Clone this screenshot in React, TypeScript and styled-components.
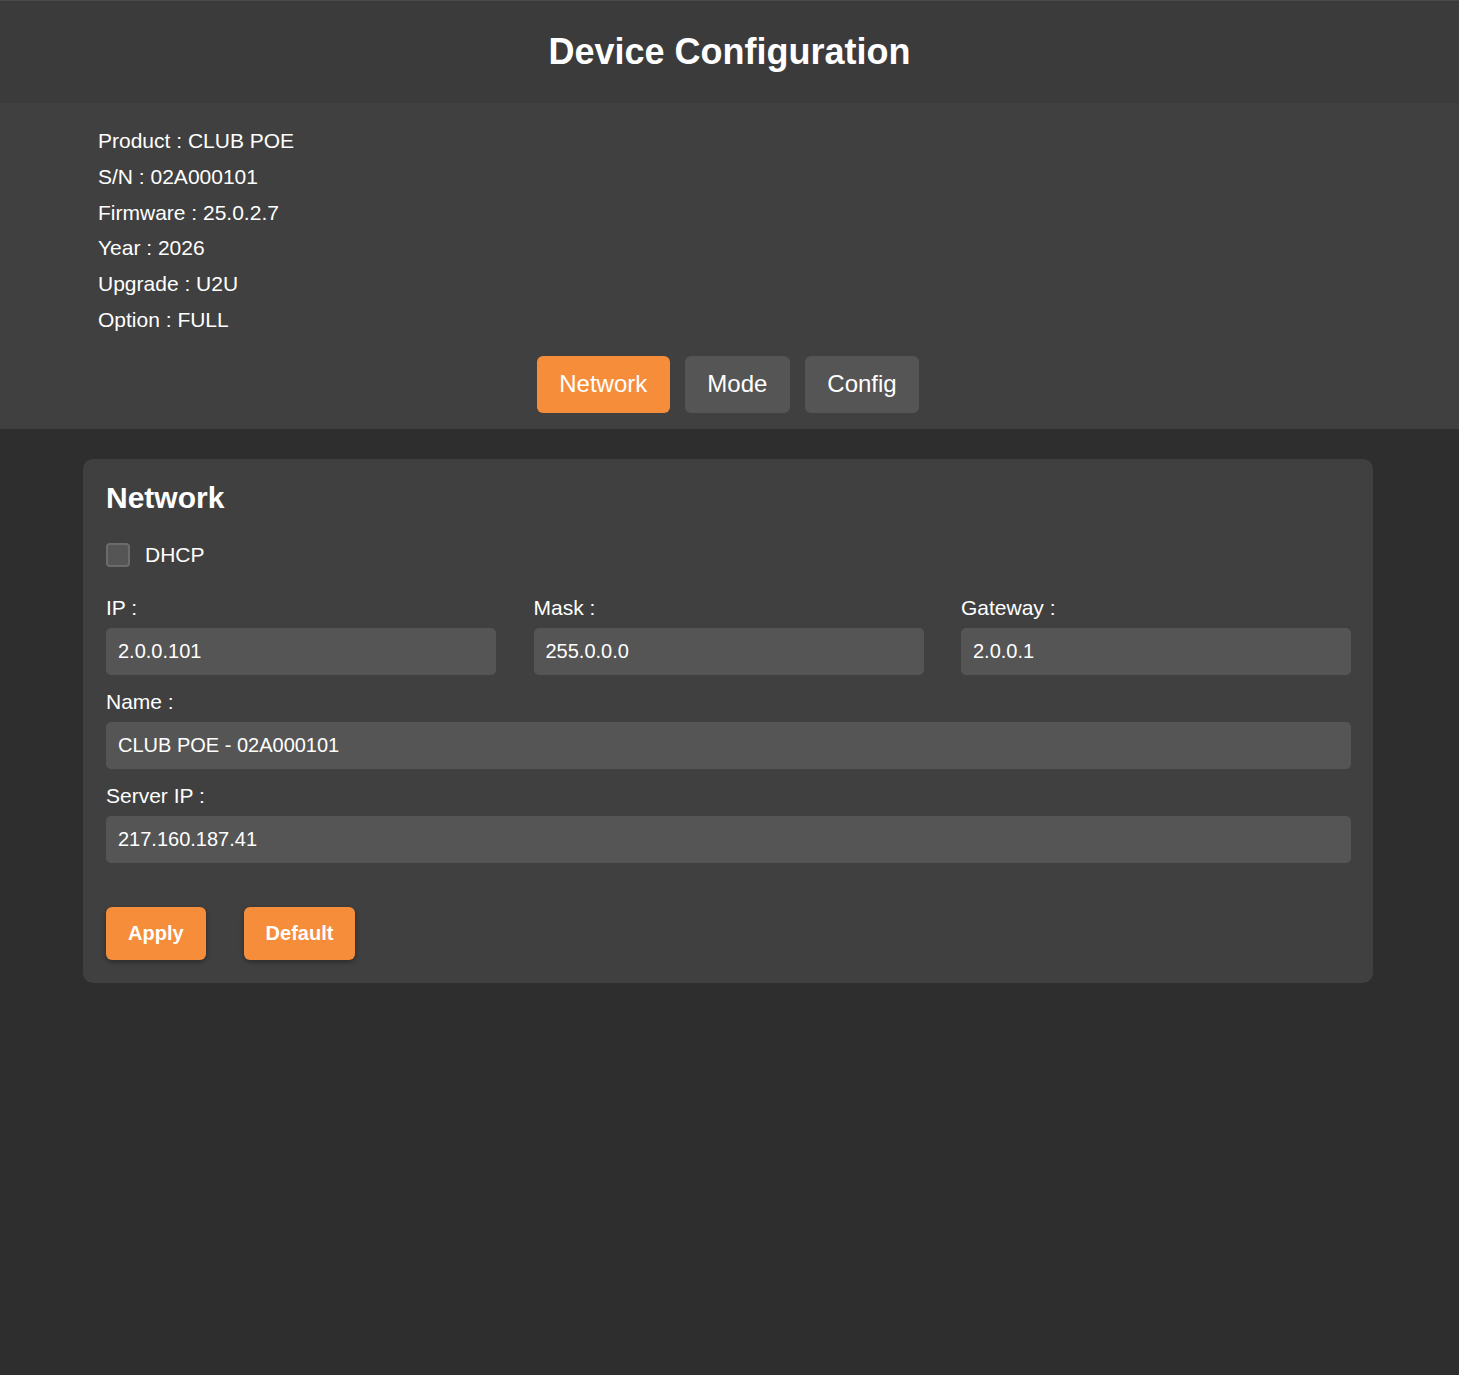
import React from "react";
import styled, { createGlobalStyle } from "styled-components";

const Global = createGlobalStyle`
  html, body { margin: 0; padding: 0; background: #2e2e2e; }
  body { font-family: "Liberation Sans", Arial, sans-serif; color: #fff; min-height: 1375px; }
  * { box-sizing: border-box; }
`;

const Page = styled.div`
  min-height: 1375px;
  background: #2e2e2e;
  border-top: 1px solid #4a4a4a;
`;

const Header = styled.header`
  height: 102px;
  background: #3b3b3b;
  display: flex;
  align-items: center;
  justify-content: center;
`;

const Title = styled.h1`
  margin: 0;
  font-size: 36px;
  font-weight: 700;
  line-height: 41px;
  margin-top: -2px;
`;

const InfoSection = styled.section`
  background: #404040;
  padding: 20px 0 16px 98px;
`;

const InfoLine = styled.div`
  font-size: 21px;
  line-height: 35.8px;
`;

const Tabs = styled.nav`
  display: flex;
  justify-content: center;
  gap: 15px;
  margin-top: 18px;
  padding-right: 101px;
`;

const Tab = styled.button<{ $active?: boolean }>`
  font-family: inherit;
  font-size: 24px;
  color: #fff;
  border: none;
  border-radius: 6px;
  height: 57px;
  padding: 0 22.5px;
  background: ${(p) => (p.$active ? "#f58d3a" : "#555555")};
`;

const Main = styled.main`
  padding: 30px 86px 0 83px;
`;

const Card = styled.div`
  background: #404040;
  border-radius: 10px;
  padding: 22px 22px 23px 23px;
`;

const CardTitle = styled.h2`
  margin: 0;
  font-size: 30px;
  font-weight: 700;
  line-height: 34px;
`;

const CheckRow = styled.label`
  display: flex;
  align-items: center;
  gap: 15px;
  margin-top: 28px;
  font-size: 21px;
  height: 24px;
`;

const Box = styled.span`
  width: 24px;
  height: 24px;
  border-radius: 4px;
  background: #555555;
  border: 2px solid #6b6b6b;
`;

const Grid = styled.div`
  display: grid;
  grid-template-columns: repeat(3, 1fr);
  column-gap: 37.5px;
  margin-top: 29px;
`;

const Field = styled.div<{ $top?: number }>`
  display: flex;
  flex-direction: column;
  gap: 9px;
  margin-top: ${(p) => p.$top ?? 0}px;
`;

const Label = styled.div`
  font-size: 21px;
  line-height: 23px;
`;

const Input = styled.div`
  height: 47px;
  background: #555555;
  border-radius: 5px;
  padding: 0 12px;
  display: flex;
  align-items: center;
  font-size: 20px;
`;

const Actions = styled.div`
  display: flex;
  gap: 38px;
  margin-top: 44px;
`;

const ActionButton = styled.button`
  font-family: inherit;
  font-size: 20px;
  font-weight: 700;
  color: #fff;
  background: #f58d3a;
  border: none;
  border-radius: 6px;
  height: 53px;
  padding: 0 22px;
  box-shadow: 0 2px 5px rgba(0, 0, 0, 0.35);
`;

const info = [
  "Product : CLUB POE",
  "S/N : 02A000101",
  "Firmware : 25.0.2.7",
  "Year : 2026",
  "Upgrade : U2U",
  "Option : FULL",
];

export default function App() {
  return (
    <Page>
      <Global />
      <Header>
        <Title>Device Configuration</Title>
      </Header>
      <InfoSection>
        {info.map((l) => (
          <InfoLine key={l}>{l}</InfoLine>
        ))}
        <Tabs>
          <Tab $active>Network</Tab>
          <Tab>Mode</Tab>
          <Tab>Config</Tab>
        </Tabs>
      </InfoSection>
      <Main>
        <Card>
          <CardTitle>Network</CardTitle>
          <CheckRow>
            <Box />
            DHCP
          </CheckRow>
          <Grid>
            <Field>
              <Label>IP :</Label>
              <Input>2.0.0.101</Input>
            </Field>
            <Field>
              <Label>Mask :</Label>
              <Input>255.0.0.0</Input>
            </Field>
            <Field>
              <Label>Gateway :</Label>
              <Input>2.0.0.1</Input>
            </Field>
          </Grid>
          <Field $top={15}>
            <Label>Name :</Label>
            <Input>CLUB POE - 02A000101</Input>
          </Field>
          <Field $top={15}>
            <Label>Server IP :</Label>
            <Input>217.160.187.41</Input>
          </Field>
          <Actions>
            <ActionButton>Apply</ActionButton>
            <ActionButton>Default</ActionButton>
          </Actions>
        </Card>
      </Main>
    </Page>
  );
}
